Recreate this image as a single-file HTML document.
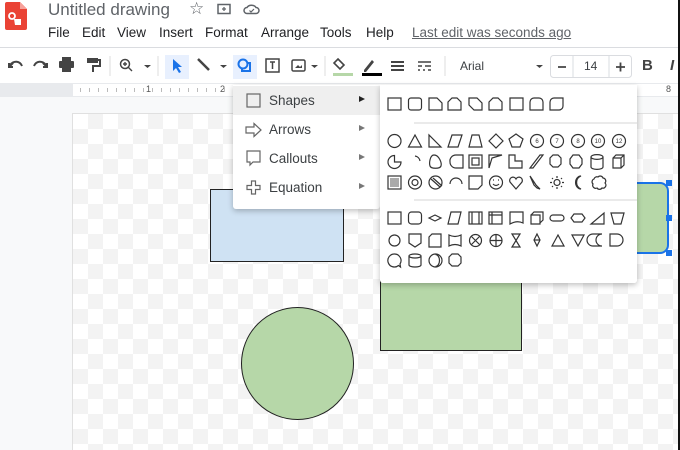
<!DOCTYPE html>
<html><head><meta charset="utf-8"><style>
*{margin:0;padding:0;box-sizing:border-box}
body{width:680px;height:450px;overflow:hidden;background:#fff;font-family:"Liberation Sans",Arial,sans-serif;position:relative;color:#202124}
.abs{position:absolute}
.menu span{position:absolute;top:25px;font-size:13.5px;color:#202124}
.ck{background-color:#fff;background-image:linear-gradient(45deg,#f3f3f3 25%,transparent 25%,transparent 75%,#f3f3f3 75%),linear-gradient(45deg,#f3f3f3 25%,transparent 25%,transparent 75%,#f3f3f3 75%);background-size:30px 30px;background-position:0 0,15px 15px}
.mi{position:absolute;left:0;width:147px;height:29px;font-size:13.5px;color:#3c4043}
.mi span{position:absolute;left:36px;top:7px}
.mi b{position:absolute;left:126px;top:10px;width:0;height:0;border-left:6px solid #777;border-top:3.5px solid transparent;border-bottom:3.5px solid transparent}
</style></head><body>
<!-- logo -->
<svg class="abs" style="left:5px;top:2px" width="22" height="28" viewBox="0 0 22 28"><path d="M0 2a2 2 0 0 1 2-2h13l7 7v19a2 2 0 0 1-2 2H2a2 2 0 0 1-2-2z" fill="#ea4335"/><path d="M15 0v7h7z" fill="#f7a19a"/><circle cx="7" cy="14" r="3" fill="none" stroke="#fff" stroke-width="1.8"/><path d="M9 17h7v6H10z" fill="#fff"/></svg>
<div class="abs" style="left:48px;top:0px;font-size:17px;color:#5f6368">Untitled drawing</div>
<div class="abs" style="left:189px;top:-1px;font-size:17px;color:#5f6368">☆</div>
<svg class="abs" style="left:217px;top:3px" width="14" height="12"><rect x="1" y="1.5" width="12" height="9" fill="none" stroke="#5f6368" stroke-width="1.5"/><path d="M5 6h4M7 4v4" stroke="#5f6368" stroke-width="1.3"/></svg>
<svg class="abs" style="left:243px;top:3px" width="18" height="12"><path d="M4 10.5a3 3 0 0 1 0-6 5 4 0 0 1 9 0 3 3 0 0 1 0 6z" fill="none" stroke="#5f6368" stroke-width="1.5"/><path d="M6.5 7.5l1.5 1.5 3-3" fill="none" stroke="#5f6368" stroke-width="1.2"/></svg>
<div class="menu">
<span style="left:48px">File</span><span style="left:82px">Edit</span><span style="left:117px">View</span><span style="left:159px">Insert</span><span style="left:205px">Format</span><span style="left:261px">Arrange</span><span style="left:320px">Tools</span><span style="left:366px">Help</span>
<span style="left:412px;color:#5f6368;text-decoration:underline">Last edit was seconds ago</span></div>
<div class="abs" style="left:0;top:47px;width:680px;height:1px;background:#dadce0"></div>
<!-- toolbar -->
<svg class="abs" style="left:0;top:50px" width="680" height="32" fill="#444" stroke="#444">
<path d="M9 17l4-4 M9 13v4h4" fill="none" stroke-width="2"/><path d="M10 15c4-5 10-4 12 1" fill="none" stroke-width="2"/>
<path d="M47 17l-4-4 M47 13v4h-4" fill="none" stroke-width="2"/><path d="M46 15c-4-5-10-4-12 1" fill="none" stroke-width="2"/>
<rect x="59" y="11" width="15" height="7" rx="1" stroke="none"/><rect x="62" y="7" width="9" height="4" stroke="none"/><rect x="62" y="17" width="9" height="5" stroke="none"/>
<path d="M87 8h11v5h-11z" stroke="none"/><path d="M98 10h2v6h-7v6" fill="none" stroke-width="2"/>
<line x1="110" y1="6" x2="110" y2="26" stroke="#ddd"/>
<circle cx="125" cy="14" r="4.5" fill="none" stroke-width="1.5"/><path d="M128 17l4 4M123 14h4M125 12v4" stroke-width="1.4"/>
<path d="M144 15h7l-3.5 3z" stroke="none"/>
<line x1="158" y1="6" x2="158" y2="26" stroke="#ddd"/>
<rect x="165" y="5" width="24" height="24" fill="#e8f0fe" stroke="none"/>
<path d="M173 9v12l3-3 3 5 2-1-3-5h4z" fill="#1a73e8" stroke="none"/>
<path d="M198 9l11 11" stroke-width="2.5"/>
<path d="M220 15h7l-3.5 3z" stroke="none"/>
<rect x="233" y="5" width="24" height="24" fill="#e8f0fe" stroke="none"/>
<circle cx="243" cy="14" r="4.5" fill="none" stroke="#1a73e8" stroke-width="2"/><path d="M247 13h3v8h-8v-3" fill="none" stroke="#1a73e8" stroke-width="2"/>
<rect x="266" y="9" width="13" height="13" fill="none" stroke-width="1.5"/><path d="M270 12h5M272.5 12v7" stroke-width="1.5"/>
<rect x="292" y="10" width="13" height="11" rx="1.5" fill="none" stroke-width="1.5"/><path d="M295 18l3-3 2 2 2-2v3z" stroke="none"/>
<path d="M311 15h7l-3.5 3z" stroke="none"/>
<line x1="325" y1="6" x2="325" y2="26" stroke="#ddd"/>
<path d="M338 9l6 6-4 4-6-6z" fill="none" stroke-width="1.6"/><rect x="333" y="23" width="20" height="3" fill="#b6d7a8" stroke="none"/>
<path d="M364 20l8-10 2 2-8 10h-2z" stroke="none"/><rect x="362" y="23" width="20" height="3" fill="#000" stroke="none"/>
<path d="M391 12h13M391 16h13M391 20h13" stroke-width="2"/>
<path d="M418 12h13M418 16h4M425 16h6M418 20h2M423 20h2M428 20h3" stroke-width="1.6"/>
<line x1="445" y1="6" x2="445" y2="26" stroke="#ddd"/>
<path d="M536 15h7l-3.5 3z" stroke="none"/>
<rect x="550.5" y="5.5" width="81" height="22" rx="3" fill="#fff" stroke="#dadce0"/>
<line x1="573" y1="6" x2="573" y2="27" stroke="#dadce0"/><line x1="609" y1="6" x2="609" y2="27" stroke="#dadce0"/>
<path d="M558 17h8M616 17h9M620.5 12.5v9" stroke-width="1.8"/>
</svg>
<div class="abs" style="left:460px;top:59px;font-size:12px;color:#3c4043">Arial</div>
<div class="abs" style="left:584px;top:59px;font-size:12px;color:#3c4043">14</div>
<div class="abs" style="left:642px;top:57px;font-size:15px;font-weight:bold;color:#444">B</div>
<div class="abs" style="left:670px;top:57px;font-size:15px;font-weight:bold;font-style:italic;color:#444">I</div>
<!-- ruler -->
<div class="abs" style="left:0;top:83px;width:680px;height:14px;background:#e8eaed"></div>
<div class="abs" style="left:73px;top:84px;width:605px;height:12px;background:#fff"></div>
<div class="abs" style="left:146px;top:84px;font-size:9px;color:#555">1</div>
<div class="abs" style="left:220px;top:84px;font-size:9px;color:#555">2</div>
<div class="abs" style="left:666px;top:84px;font-size:9px;color:#555">8</div>
<div class="abs" style="left:80px;top:88px;width:150px;height:4px;background:repeating-linear-gradient(90deg,#bbb 0 1px,transparent 1px 9px)"></div>
<!-- canvas -->
<div class="abs" style="left:0;top:97px;width:680px;height:353px;background:#f8f9fa"></div>
<div class="abs ck" style="left:72px;top:113px;width:606px;height:337px;border-left:1px solid #e0e0e0;border-top:1px solid #e0e0e0"></div>
<div class="abs" style="left:210px;top:189px;width:134px;height:73px;background:#cfe2f3;border:1px solid #222"></div>
<div class="abs" style="left:241px;top:307px;width:113px;height:113px;border-radius:50%;background:#b6d7a8;border:1px solid #222"></div>
<div class="abs" style="left:380px;top:270px;width:142px;height:81px;background:#b6d7a8;border:1px solid #222"></div>
<div class="abs" style="left:610px;top:182px;width:59px;height:72px;background:#b6d7a8;border:2px solid #1a73e8;border-radius:9px"></div>
<div class="abs" style="left:666px;top:180px;width:6px;height:6px;background:#1a73e8"></div>
<div class="abs" style="left:666px;top:215px;width:6px;height:6px;background:#1a73e8"></div>
<div class="abs" style="left:666px;top:250px;width:6px;height:6px;background:#1a73e8"></div>
<div class="abs" style="left:678px;top:0;width:2px;height:450px;background:#111"></div>
<!-- menu -->
<div class="abs" style="left:233px;top:85px;width:147px;height:124px;background:#fff;box-shadow:0 2px 6px rgba(0,0,0,.25);border-radius:0 0 3px 3px">
<div class="mi" style="top:1px;background:#efefef"><svg class="abs" style="left:13px;top:7px" width="16" height="16"><rect x="1" y="1" width="13" height="13" fill="none" stroke="#666" stroke-width="1.2"/></svg><span>Shapes</span><b style="border-left-color:#222"></b></div>
<div class="mi" style="top:30px"><svg class="abs" style="left:12px;top:7px" width="18" height="16"><path d="M1 5h8V1.5l7 6.5-7 6.5V11H1z" fill="none" stroke="#666" stroke-width="1.2"/></svg><span>Arrows</span><b></b></div>
<div class="mi" style="top:59px"><svg class="abs" style="left:13px;top:6px" width="16" height="17"><path d="M1 1h13v11H7l-3 3v-3H1z" fill="none" stroke="#666" stroke-width="1.2"/></svg><span>Callouts</span><b></b></div>
<div class="mi" style="top:88px"><svg class="abs" style="left:13px;top:7px" width="16" height="16"><path d="M5.5 1h4v4.5H14v4H9.5V14h-4V9.5H1v-4h4.5z" fill="none" stroke="#666" stroke-width="1.2"/></svg><span>Equation</span><b></b></div>
</div>
<!-- submenu -->
<svg class="abs" style="left:380px;top:85px;box-shadow:0 2px 6px rgba(0,0,0,.25);border-radius:0 0 3px 3px" width="257" height="198" fill="none" stroke="#333" stroke-width="1.2">
<rect width="257" height="198" fill="#fff" stroke="none"/>
<line x1="34" y1="38" x2="257" y2="38" stroke="#ddd"/><line x1="34" y1="115" x2="257" y2="115" stroke="#ddd"/>
<g transform="translate(8,13)">
<rect x="0" y="0" width="13" height="12"/>
<rect x="20.5" y="0" width="13" height="12" rx="2.5"/>
<path d="M41 0h8l5 5v7H41z"/>
<path d="M64 0h5l4 4v8H60V4z"/>
<path d="M81 0h8l5 5v7H86l-5-5z"/>
<path d="M105 0h5l4 4v8h-13V4z"/>
<path d="M122 0h13v12h-13z"/>
<path d="M142 12V4a4 4 0 0 1 4-4h5a4 4 0 0 1 4 4v8z"/>
<path d="M166 0h9v8a4 4 0 0 1-4 4h-9V4a4 4 0 0 1 4-4z"/>
</g>
<g transform="translate(8,49)">
<circle cx="6.5" cy="7" r="6.5"/><path d="M20.5 13l6.5-12 6.5 12z"/><path d="M41 1v12h12z"/><path d="M64 1h10l-4 12H60z"/><path d="M84 1h7l3 12H81z"/><path d="M108 0l7 7-7 7-7-7z"/><path d="M128 0l7 5-3 8h-8l-3-8z"/>
<circle cx="149" cy="7" r="6.5"/><circle cx="169" cy="7" r="6.5"/><circle cx="190" cy="7" r="6.5"/><circle cx="210" cy="7" r="6.5"/><circle cx="231" cy="7" r="6.5"/>
<g font-size="6" fill="#333" stroke="none" text-anchor="middle" font-family="Liberation Sans"><text x="149" y="9">6</text><text x="169" y="9">7</text><text x="190" y="9">8</text><text x="210" y="9">10</text><text x="231" y="9">12</text></g>
</g>
<g transform="translate(8,70)">
<path d="M6.5 0.5a6.5 6.5 0 1 0 6.5 6.5H6.5z"/><path d="M27 1a6 6 0 0 1 5 5"/><path d="M46 0c5 0 8 8 7 11s-10 3-11 0 0-11 4-11z"/><path d="M68 0h7v13h-7a6 6 0 0 1-6-6 6 6 0 0 1 6-7z"/><rect x="81" y="0" width="13" height="13"/><rect x="84" y="3" width="7" height="7"/><path d="M101 13V0h13l-10 3z"/><path d="M121 13V0h6v6h7v7z"/><path d="M142 13l10-13h3L145 13z"/><path d="M165 0h5l3 3v6l-3 3h-5l-3-3V3z"/><path d="M185 0h6l3 4v5l-3 4h-6l-3-4V4z"/><path d="M203 2a5 2 0 0 1 12 0v10a5 2 0 0 1-12 0z M203 2a5 2 0 0 0 12 0"/><path d="M225 3l3-3h8v10l-3 3h-8z M225 3h8v10 M233 3l3-3"/>
</g>
<g transform="translate(8,91)">
<rect x="0" y="0" width="13" height="13"/><rect x="2" y="2" width="9" height="9" fill="#aaa" stroke="none"/><circle cx="27" cy="6.5" r="6.5"/><circle cx="27" cy="6.5" r="3"/><circle cx="47.5" cy="6.5" r="6.5"/><path d="M43 3l9 8M45 2l9 8" /><path d="M62 8a6 6 0 0 1 12 0"/><path d="M81 0h13v9l-4 4h-9z"/><circle cx="108" cy="6.5" r="6.5"/><path d="M105 8q3 3 6 0M105 4h1M110 4h1"/><path d="M128 13l-6-7a3 3 0 0 1 6-3 3 3 0 0 1 6 3z"/><path d="M142 0l4 6 2 3 4 4-3-1-3-3z"/><circle cx="169" cy="6.5" r="3"/><path d="M169 0v2M169 11v2M162 6.5h2M174 6.5h2M164 2l1 1M173 10l1 1M174 2l-1 1M164 11l1-1"/><path d="M193 0a7 7 0 0 0 0 13 5 6 0 0 1 0-13z"/><path d="M206 3a3 3 0 0 1 4-2 3 3 0 0 1 5 1 3 3 0 0 1 2 5 3 3 0 0 1-3 5 3 3 0 0 1-5 0 3 3 0 0 1-4-4 3 3 0 0 1 1-5z"/>
</g>
<g transform="translate(8,127)">
<rect x="0" y="0" width="13" height="12"/><rect x="20.5" y="0" width="13" height="12" rx="3"/><path d="M41 6l6-3 6 3-6 3z"/><path d="M63 0h10l-3 12H60z"/><rect x="81" y="0" width="13" height="12"/><path d="M84 0v12M91 0v12"/><rect x="101" y="0" width="13" height="12"/><path d="M101 3h13M104 0v12"/><path d="M122 0h13v11q-6-3-13 1z"/><path d="M143 3h9v9h-9z M143 3l3-3h9v8l-3 3"/><rect x="162" y="3" width="14" height="6" rx="3"/><path d="M183 6l3-4h8l3 4-3 4h-8z"/><path d="M203 12h13V1z"/><path d="M223 1h13l-3 11h-7z"/>
</g>
<g transform="translate(8,149)">
<circle cx="6.5" cy="6.5" r="5.5"/><path d="M21 0h12v9l-6 4-6-4z"/><path d="M44 0h9v13H41V3z"/><path d="M61 1q6 3 12 0v11q-6-3-12 0z"/><circle cx="87.5" cy="6.5" r="6"/><path d="M83 2l9 9M92 2l-9 9"/><circle cx="108" cy="6.5" r="6"/><path d="M102 6.5h12M108 0.5v12"/><path d="M124 0h8l-8 13h8z M124 0h8"/><path d="M149 0l3 6-3 6-3-6z M146 6h6"/><path d="M164 12l6-11 6 11z"/><path d="M184 1h12l-6 11z"/><path d="M205 0h9a6 6 0 0 0 0 12h-9a6 6 0 0 1 0-12z"/><path d="M222 0h7a6 6 0 0 1 0 12h-7z"/>
</g>
<g transform="translate(8,169)">
<path d="M6.5 0a6.5 6.5 0 1 0 4 11.5l2 1.5-.5-3A6.5 6.5 0 0 0 6.5 0z"/><path d="M21 2a6 2 0 0 1 12 0v9a6 2 0 0 1-12 0z M21 2a6 2 0 0 0 12 0"/><rect x="41" y="0" width="13" height="13" rx="6.5"/><path d="M47.5 0.5a4 6 0 0 1 0 12"/><path d="M64 0h6l3 3v6l-3 3h-6l-3-3V3z"/>
</g>
</svg>
</body></html>
